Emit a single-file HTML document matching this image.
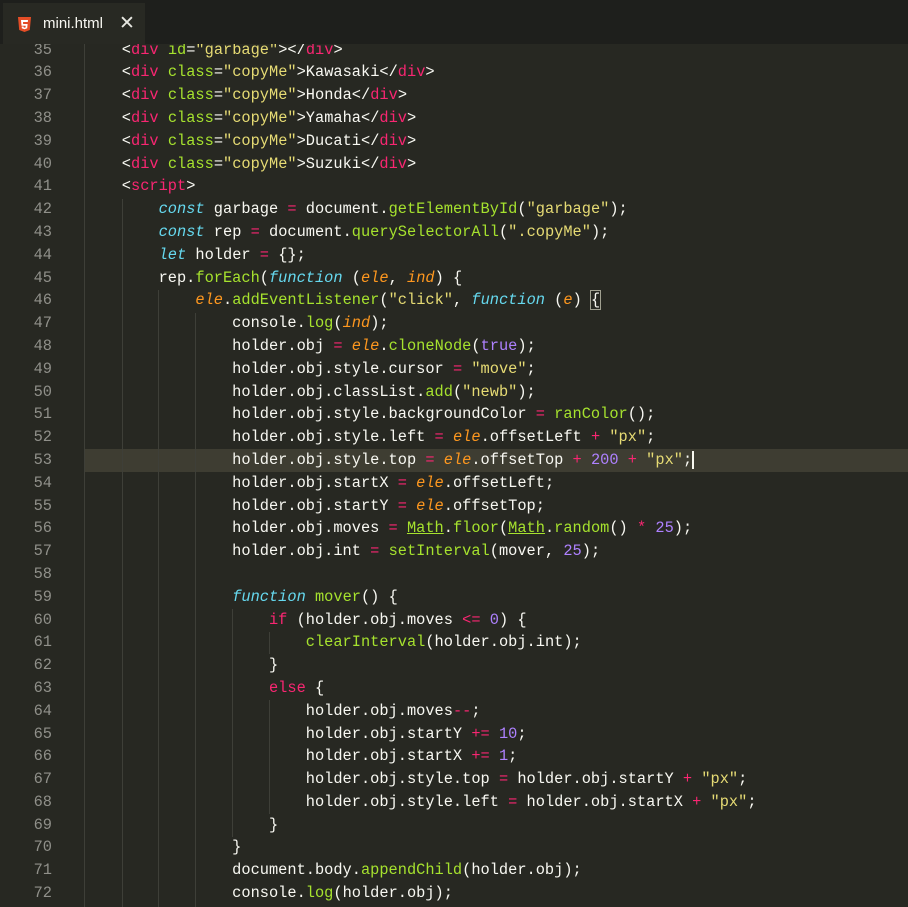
<!DOCTYPE html>
<html><head><meta charset="utf-8"><style>
body{margin:0;width:908px;height:907px;background:#272822;overflow:hidden;position:relative;font-family:"Liberation Mono",monospace;}
.tabbar{position:absolute;left:0;top:0;width:908px;height:44px;background:#1e1f1c;z-index:3}
.tab{position:absolute;left:3px;top:3px;width:142px;height:41px;background:#282923;}
.tab .name{position:absolute;left:40px;top:12px;font-family:"Liberation Sans",sans-serif;font-size:15px;color:#f8f8f2}
.tab .x{position:absolute;left:116px;top:9px;font-family:"Liberation Sans",sans-serif;font-size:19px;color:#e8e8e2}
.code{position:absolute;left:0;top:38.6px;width:908px}
.l{height:22.8px;line-height:22.8px;position:relative;white-space:pre;font-size:15.33px;color:#f8f8f2}
.n{position:absolute;left:0;width:52px;text-align:right;color:#90908a}
.t{position:absolute;left:85px}
.hl{background:#3e3d32;margin-left:84px}
.hl .n{left:-84px}.hl .t{left:1px}
.g{position:absolute;width:1px;background:#3e3f38;z-index:1}
.k{color:#f92672}.a{color:#a6e22e}.s{color:#e6db74}.i{color:#66d9ef;font-style:italic}.f{color:#a6e22e}.p{color:#fd971f;font-style:italic}.m{color:#ae81ff}.u{color:#a6e22e;text-decoration:underline}
.box{outline:1px solid #a0a090}
.cur{border-right:2px solid #f8f8f0}
</style></head><body>
<div class="tabbar"><div class="tab">
<svg style="position:absolute;left:15px;top:14px" width="13" height="15" viewBox="0 0 13 15"><path d="M0 0h13l-1.2 13L6.5 15 1.2 13z" fill="#e44d26"/><path d="M3 3h7l-.2 2H5l.1 2h4.5l-.4 4.3-2.7.9-2.7-.9-.1-1.8h1.8l.1.9 1 .3 1-.3.1-1.6H3.5z" fill="#fff"/></svg>
<span class="name">mini.html</span><span class="x">✕</span></div></div>
<div class="g" style="left:84px;top:44px;height:863px"></div>
<div class="g" style="left:122px;top:199px;height:708px"></div>
<div class="g" style="left:158px;top:290px;height:617px"></div>
<div class="g" style="left:195px;top:313px;height:594px"></div>
<div class="g" style="left:232px;top:609px;height:228px"></div>
<div class="g" style="left:269px;top:632px;height:22px"></div>
<div class="g" style="left:269px;top:700px;height:114px"></div>
<div class="code">
<div class="l"><span class="n">35</span><span class="t">    &lt;<span class="k">div</span> <span class="a">id</span>=<span class="s">"garbage"</span>&gt;&lt;/<span class="k">div</span>&gt;</span></div>
<div class="l"><span class="n">36</span><span class="t">    &lt;<span class="k">div</span> <span class="a">class</span>=<span class="s">"copyMe"</span>&gt;Kawasaki&lt;/<span class="k">div</span>&gt;</span></div>
<div class="l"><span class="n">37</span><span class="t">    &lt;<span class="k">div</span> <span class="a">class</span>=<span class="s">"copyMe"</span>&gt;Honda&lt;/<span class="k">div</span>&gt;</span></div>
<div class="l"><span class="n">38</span><span class="t">    &lt;<span class="k">div</span> <span class="a">class</span>=<span class="s">"copyMe"</span>&gt;Yamaha&lt;/<span class="k">div</span>&gt;</span></div>
<div class="l"><span class="n">39</span><span class="t">    &lt;<span class="k">div</span> <span class="a">class</span>=<span class="s">"copyMe"</span>&gt;Ducati&lt;/<span class="k">div</span>&gt;</span></div>
<div class="l"><span class="n">40</span><span class="t">    &lt;<span class="k">div</span> <span class="a">class</span>=<span class="s">"copyMe"</span>&gt;Suzuki&lt;/<span class="k">div</span>&gt;</span></div>
<div class="l"><span class="n">41</span><span class="t">    &lt;<span class="k">script</span>&gt;</span></div>
<div class="l"><span class="n">42</span><span class="t">        <span class="i">const</span> garbage <span class="k">=</span> document.<span class="f">getElementById</span>(<span class="s">"garbage"</span>);</span></div>
<div class="l"><span class="n">43</span><span class="t">        <span class="i">const</span> rep <span class="k">=</span> document.<span class="f">querySelectorAll</span>(<span class="s">".copyMe"</span>);</span></div>
<div class="l"><span class="n">44</span><span class="t">        <span class="i">let</span> holder <span class="k">=</span> {};</span></div>
<div class="l"><span class="n">45</span><span class="t">        rep.<span class="f">forEach</span>(<span class="i">function</span> (<span class="p">ele</span>, <span class="p">ind</span>) {</span></div>
<div class="l"><span class="n">46</span><span class="t">            <span class="p">ele</span>.<span class="f">addEventListener</span>(<span class="s">"click"</span>, <span class="i">function</span> (<span class="p">e</span>) <span class="box">{</span></span></div>
<div class="l"><span class="n">47</span><span class="t">                console.<span class="f">log</span>(<span class="p">ind</span>);</span></div>
<div class="l"><span class="n">48</span><span class="t">                holder.obj <span class="k">=</span> <span class="p">ele</span>.<span class="f">cloneNode</span>(<span class="m">true</span>);</span></div>
<div class="l"><span class="n">49</span><span class="t">                holder.obj.style.cursor <span class="k">=</span> <span class="s">"move"</span>;</span></div>
<div class="l"><span class="n">50</span><span class="t">                holder.obj.classList.<span class="f">add</span>(<span class="s">"newb"</span>);</span></div>
<div class="l"><span class="n">51</span><span class="t">                holder.obj.style.backgroundColor <span class="k">=</span> <span class="f">ranColor</span>();</span></div>
<div class="l"><span class="n">52</span><span class="t">                holder.obj.style.left <span class="k">=</span> <span class="p">ele</span>.offsetLeft <span class="k">+</span> <span class="s">"px"</span>;</span></div>
<div class="l hl"><span class="n">53</span><span class="t">                holder.obj.style.top <span class="k">=</span> <span class="p">ele</span>.offsetTop <span class="k">+</span> <span class="m">200</span> <span class="k">+</span> <span class="s">"px"</span><span class="cur">;</span></span></div>
<div class="l"><span class="n">54</span><span class="t">                holder.obj.startX <span class="k">=</span> <span class="p">ele</span>.offsetLeft;</span></div>
<div class="l"><span class="n">55</span><span class="t">                holder.obj.startY <span class="k">=</span> <span class="p">ele</span>.offsetTop;</span></div>
<div class="l"><span class="n">56</span><span class="t">                holder.obj.moves <span class="k">=</span> <span class="u">Math</span>.<span class="f">floor</span>(<span class="u">Math</span>.<span class="f">random</span>() <span class="k">*</span> <span class="m">25</span>);</span></div>
<div class="l"><span class="n">57</span><span class="t">                holder.obj.int <span class="k">=</span> <span class="f">setInterval</span>(mover, <span class="m">25</span>);</span></div>
<div class="l"><span class="n">58</span><span class="t"></span></div>
<div class="l"><span class="n">59</span><span class="t">                <span class="i">function</span> <span class="f">mover</span>() {</span></div>
<div class="l"><span class="n">60</span><span class="t">                    <span class="k">if</span> (holder.obj.moves <span class="k">&lt;=</span> <span class="m">0</span>) {</span></div>
<div class="l"><span class="n">61</span><span class="t">                        <span class="f">clearInterval</span>(holder.obj.int);</span></div>
<div class="l"><span class="n">62</span><span class="t">                    }</span></div>
<div class="l"><span class="n">63</span><span class="t">                    <span class="k">else</span> {</span></div>
<div class="l"><span class="n">64</span><span class="t">                        holder.obj.moves<span class="k">--</span>;</span></div>
<div class="l"><span class="n">65</span><span class="t">                        holder.obj.startY <span class="k">+=</span> <span class="m">10</span>;</span></div>
<div class="l"><span class="n">66</span><span class="t">                        holder.obj.startX <span class="k">+=</span> <span class="m">1</span>;</span></div>
<div class="l"><span class="n">67</span><span class="t">                        holder.obj.style.top <span class="k">=</span> holder.obj.startY <span class="k">+</span> <span class="s">"px"</span>;</span></div>
<div class="l"><span class="n">68</span><span class="t">                        holder.obj.style.left <span class="k">=</span> holder.obj.startX <span class="k">+</span> <span class="s">"px"</span>;</span></div>
<div class="l"><span class="n">69</span><span class="t">                    }</span></div>
<div class="l"><span class="n">70</span><span class="t">                }</span></div>
<div class="l"><span class="n">71</span><span class="t">                document.body.<span class="f">appendChild</span>(holder.obj);</span></div>
<div class="l"><span class="n">72</span><span class="t">                console.<span class="f">log</span>(holder.obj);</span></div>
</div>
</body></html>
